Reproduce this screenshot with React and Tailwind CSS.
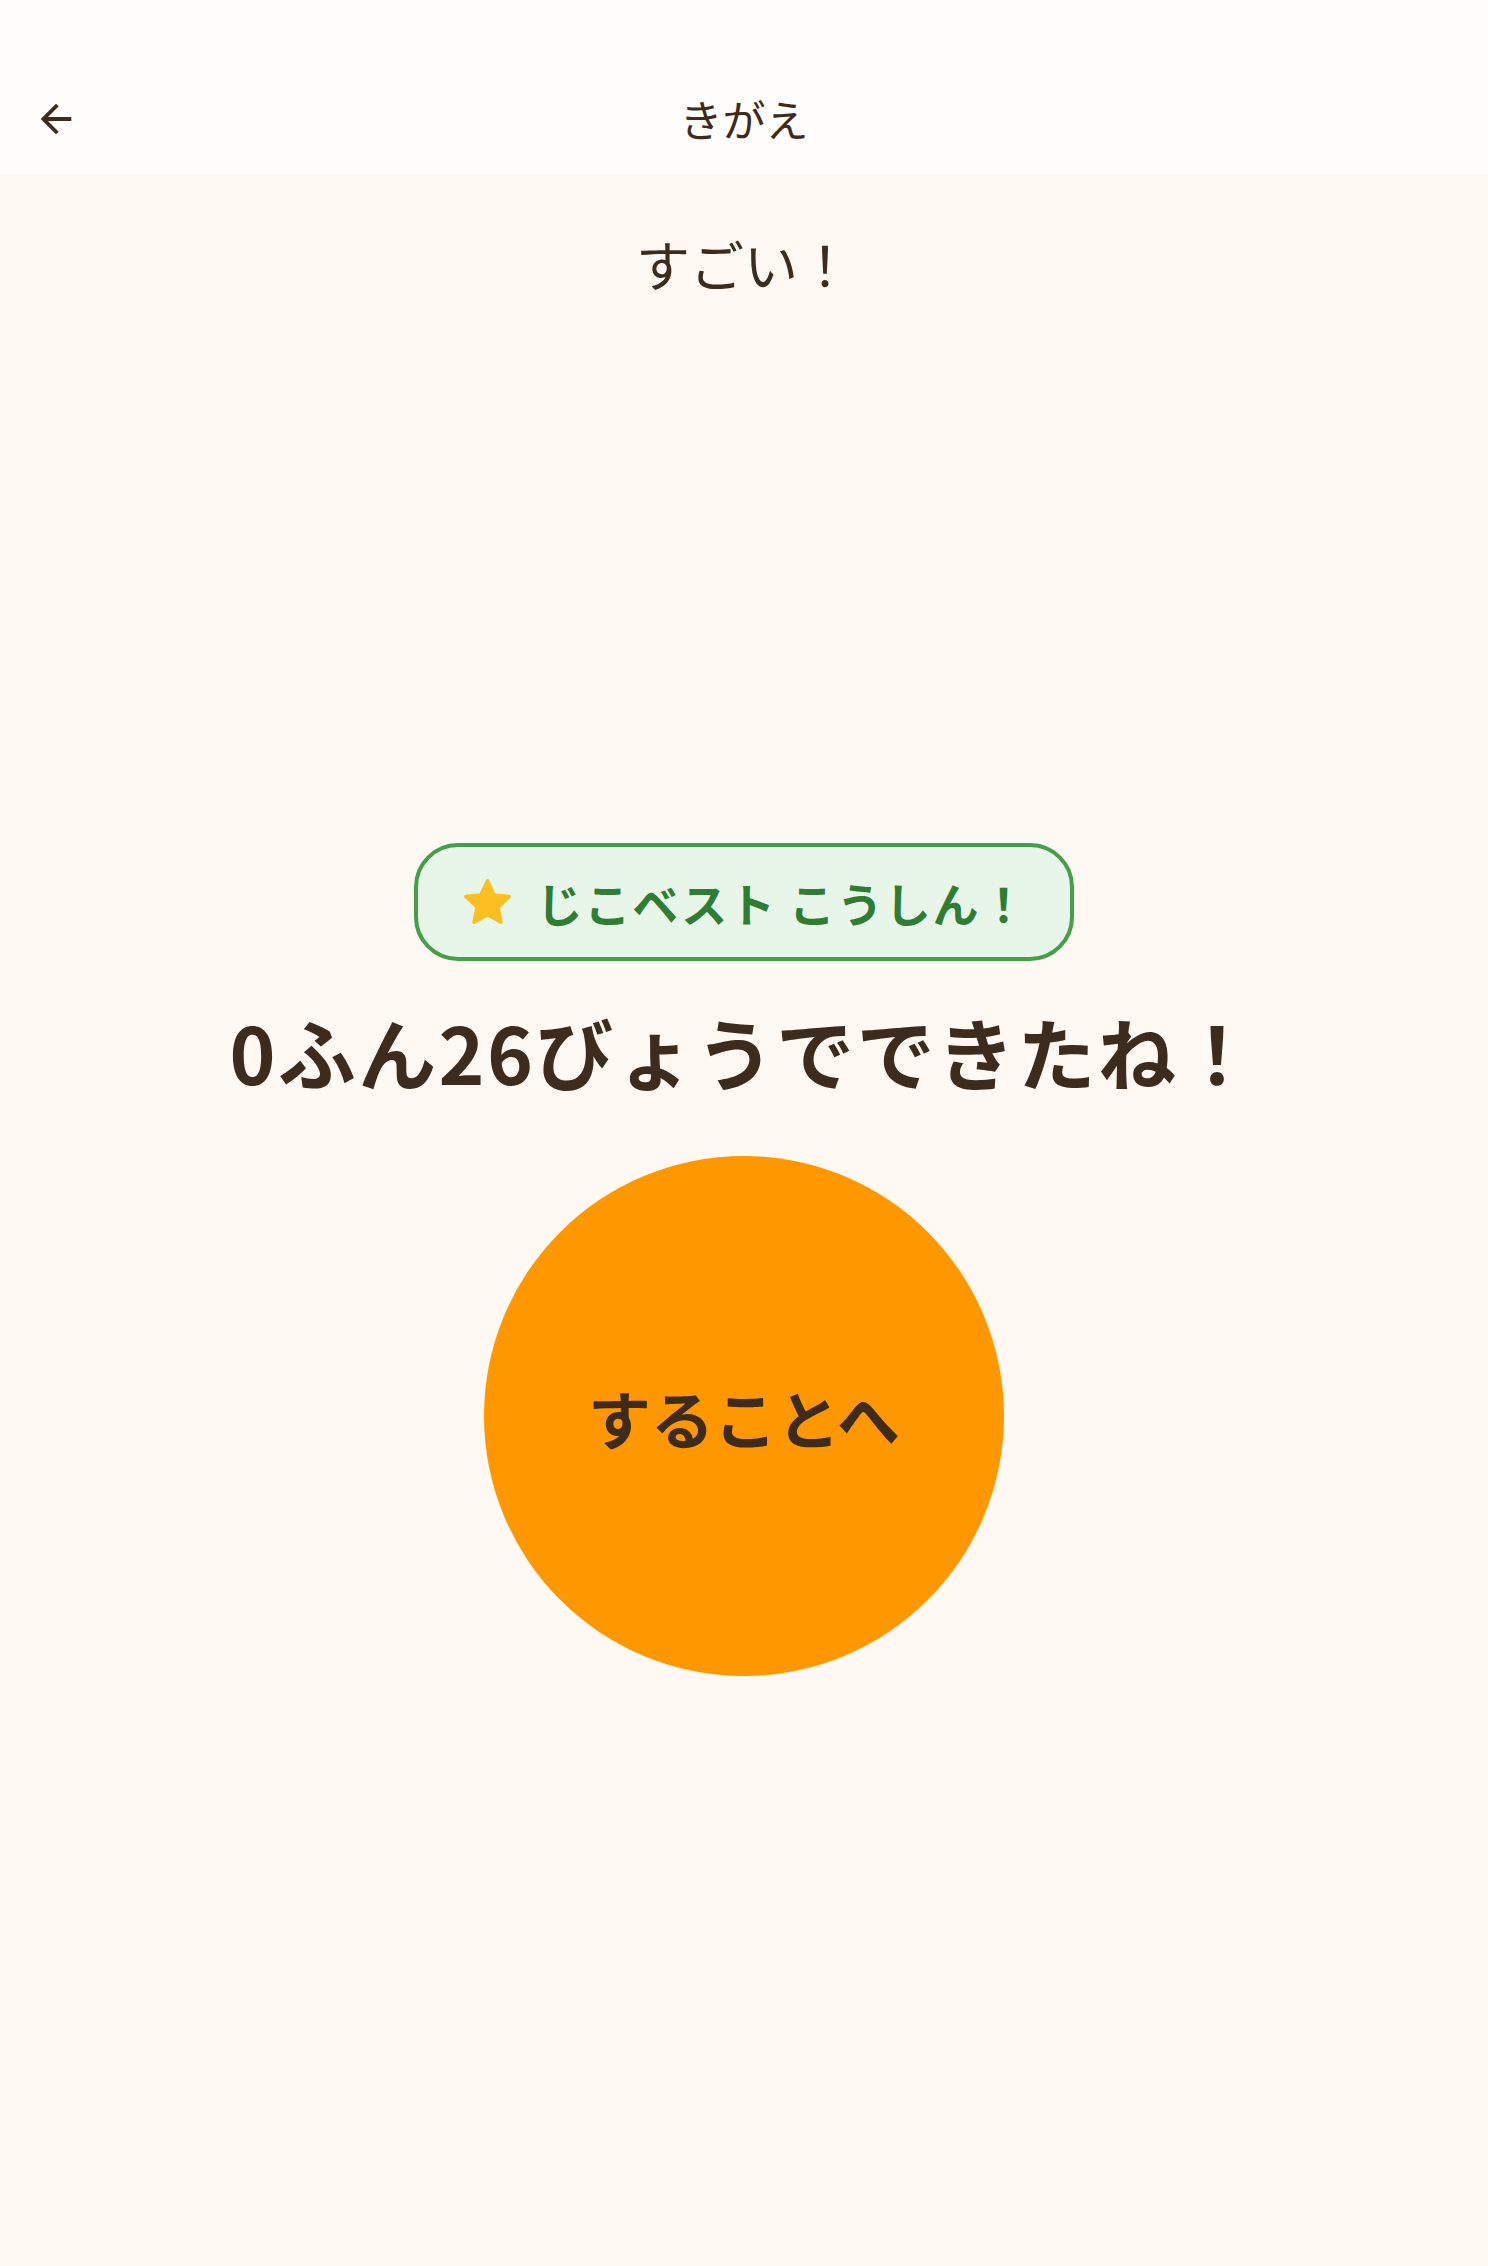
import { useState } from 'react';

const FONT = { fontFamily: '"Noto Sans CJK JP", "Noto Sans", sans-serif' };

function BackArrow() {
  return (
    <svg viewBox="0 0 24 24" className="w-[46px] h-[46px]" fill="#3d2c1e">
      <path d="M20 11H7.83l5.59-5.59L12 4l-8 8 8 8 1.41-1.41L7.83 13H20v-2z" />
    </svg>
  );
}

function StarIcon() {
  return (
    <svg
      viewBox="0 0 24 24"
      className="w-[55px] h-[55px] shrink-0"
      fill="#fbbf24"
      stroke="#fbbf24"
      strokeWidth="1.5"
      strokeLinejoin="round"
    >
      <path d="M12 2.5l2.9 6.2 6.6.7-4.9 4.6 1.3 6.6L12 17.3l-5.9 3.3 1.3-6.6-4.9-4.6 6.6-.7z" />
    </svg>
  );
}

export default function App() {
  const [pressed, setPressed] = useState(false);

  return (
    <div className="min-h-screen bg-[#fff8f3] text-[#3d2c1e]" style={FONT}>
      {/* top bar */}
      <header className="bg-[#fffdfb] pt-[62px]">
        <div className="relative h-[113px] flex items-center justify-center">
          <button className="absolute left-[33px] top-1/2 -translate-y-1/2 flex items-center justify-center">
            <BackArrow />
          </button>
          <h1 className="text-[43px] leading-[43px] font-normal">きがえ</h1>
        </div>
      </header>

      <main className="flex flex-col items-center">
        <p className="mt-[62px] text-[54px] leading-[54px] font-normal">すごい！</p>

        {/* personal best badge */}
        <div className="mt-[552px] h-[118px] px-[42px] flex items-center gap-[22px] rounded-[44px] border-[4px] border-[#43a047] bg-[#e8f5e9]">
          <StarIcon />
          <span className="text-[46px] leading-[46px] font-bold tracking-[0.04em] text-[#2e7d32]">
            じこベスト こうしん！
          </span>
        </div>

        <p className="mt-[51px] text-[78px] leading-[78px] font-bold tracking-[0.03em]">
          0ふん26びょうでできたね！
        </p>

        <button
          onClick={() => setPressed(!pressed)}
          className="mt-[66px] w-[520px] h-[520px] rounded-full bg-[#ff9800] flex items-center justify-center"
        >
          <span className="text-[63px] leading-[63px] font-bold text-[#3d2c1e]">することへ</span>
        </button>
      </main>
    </div>
  );
}
